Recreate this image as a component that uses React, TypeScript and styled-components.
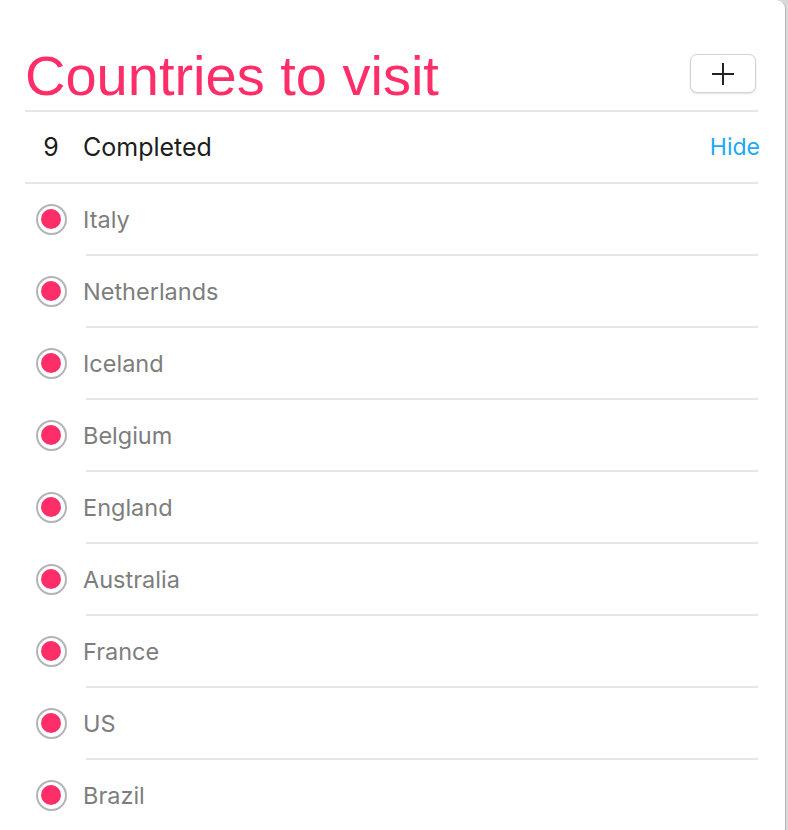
import React, { FC } from 'react';
import styled, { createGlobalStyle } from 'styled-components';

const palette = {
  pink: '#ff2d68',
  blue: '#1da9f5',
  ink: '#1c1c1c',
  muted: '#7d7d7d',
  rule: '#e6e6e6',
  ring: '#b4b4b4',
};

const GlobalStyle = createGlobalStyle`
  html, body {
    margin: 0;
    padding: 0;
    background: #d9d9d9;
  }
  body {
    font-family: Inter, "Liberation Sans", sans-serif;
    -webkit-font-smoothing: antialiased;
  }
`;

const Window = styled.div`
  box-sizing: border-box;
  width: 786px;
  height: 830px;
  background: #fff;
  border-right: 1px solid #b9b9b9;
  border-top-right-radius: 9px;
  padding: 0 27px 0 25px;
  overflow: hidden;
`;

const Header = styled.header`
  box-sizing: border-box;
  height: 112px;
  padding-top: 48px;
  display: flex;
  justify-content: space-between;
  align-items: flex-start;
  border-bottom: 2px solid ${palette.rule};
`;

const Title = styled.h1`
  margin: 0;
  font-family: 'Liberation Sans', Arial, sans-serif;
  font-weight: 400;
  font-size: 56px;
  line-height: 56px;
  color: ${palette.pink};
`;

const AddButton = styled.button.attrs({ type: 'button' })`
  box-sizing: border-box;
  width: 66px;
  height: 39px;
  margin: 6px 2px 0 0;
  padding: 0;
  display: flex;
  align-items: center;
  justify-content: center;
  background: #fff;
  border: 1px solid #d2d2d2;
  border-radius: 7px;
  box-shadow: 0 1px 2px rgba(0, 0, 0, 0.12);
  cursor: pointer;
`;

const SummaryRow = styled.div`
  box-sizing: border-box;
  height: 72px;
  display: flex;
  align-items: center;
  border-bottom: 2px solid ${palette.rule};
`;

const Count = styled.span`
  width: 52px;
  text-align: center;
  font-size: 25px;
  color: ${palette.ink};
`;

const SummaryLabel = styled.span`
  flex: 1;
  margin-left: 6px;
  font-size: 25px;
  color: ${palette.ink};
`;

const HideLink = styled.span`
  margin-right: -2px;
  font-size: 23px;
  color: ${palette.blue};
  cursor: pointer;
`;

const List = styled.ul`
  list-style: none;
  margin: 0;
  padding: 0;
`;

const Item = styled.li`
  display: flex;
  height: 72px;
`;

const BulletCell = styled.div`
  width: 52px;
  margin-right: 9px;
  display: flex;
  align-items: center;
  justify-content: center;
  padding-bottom: 2px;
`;

const Bullet = styled.span`
  box-sizing: border-box;
  width: 31px;
  height: 31px;
  border-radius: 50%;
  border: 2px solid ${palette.ring};
  display: flex;
  align-items: center;
  justify-content: center;

  &::after {
    content: '';
    width: 20px;
    height: 20px;
    border-radius: 50%;
    background: ${palette.pink};
  }
`;

const ItemBody = styled.div`
  box-sizing: border-box;
  flex: 1;
  display: flex;
  align-items: center;
  border-bottom: 2px solid ${palette.rule};
`;

const ItemLabel = styled.span`
  margin-left: -3px;
  font-size: 23.5px;
  color: ${palette.muted};
`;

const countries = [
  'Italy',
  'Netherlands',
  'Iceland',
  'Belgium',
  'England',
  'Australia',
  'France',
  'US',
  'Brazil',
];

const PlusIcon: FC = () => (
  <svg width="22" height="22" viewBox="0 0 22 22">
    <path d="M11 0v22M0 11h22" stroke="#222" strokeWidth="2" fill="none" />
  </svg>
);

export default function App() {
  return (
    <>
      <GlobalStyle />
      <Window>
        <Header>
          <Title>Countries to visit</Title>
          <AddButton aria-label="Add">
            <PlusIcon />
          </AddButton>
        </Header>
        <SummaryRow>
          <Count>{countries.length}</Count>
          <SummaryLabel>Completed</SummaryLabel>
          <HideLink>Hide</HideLink>
        </SummaryRow>
        <List>
          {countries.map((name) => (
            <Item key={name}>
              <BulletCell>
                <Bullet />
              </BulletCell>
              <ItemBody>
                <ItemLabel>{name}</ItemLabel>
              </ItemBody>
            </Item>
          ))}
        </List>
      </Window>
    </>
  );
}
